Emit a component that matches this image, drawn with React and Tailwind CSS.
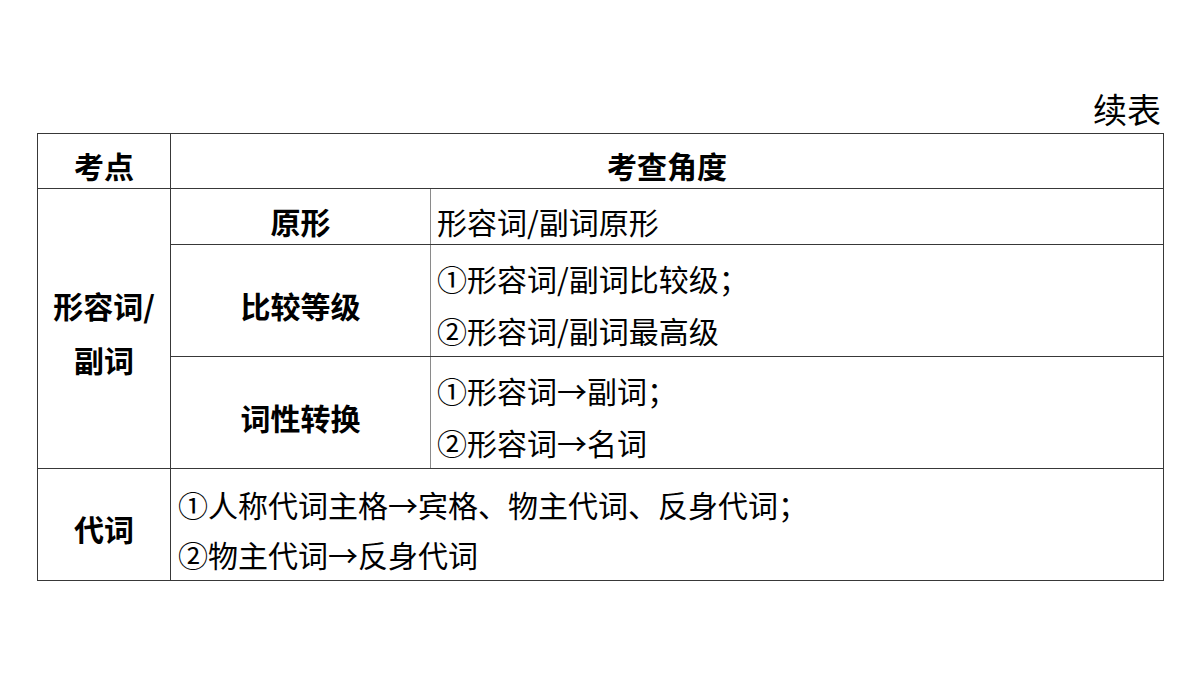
const cell = "border border-[#383838] align-middle";
const mid = "border border-[#383838] border-r-[#8a8a8a] align-middle";

export default function App() {
  return (
    <div
      className="w-[1200px] h-[675px] bg-white text-black"
      style={{ fontFamily: '"Noto Sans CJK SC", "Noto Sans", sans-serif' }}
    >
      <div className="pt-[88px] pl-[37px]">
        {/* caption */}
        <div className="w-[1124px] text-right text-[34px] leading-[42px] h-[45px]">续表</div>

        <table className="border-collapse table-fixed text-[30px] leading-[42px]">
          <colgroup>
            <col className="w-[133px]" />
            <col className="w-[260px]" />
            <col className="w-[733px]" />
          </colgroup>
          <tbody>
            <tr className="h-[55px]">
              <td className={`${cell} text-center font-bold pt-[8px]`}>考点</td>
              <td colSpan={2} className={`${cell} text-center font-bold pt-[8px]`}>
                考查角度
              </td>
            </tr>
            <tr className="h-[56px]">
              <td rowSpan={3} className={`${cell} text-center font-bold leading-[54px] pt-[6px]`}>
                形容词/
                <br />
                副词
              </td>
              <td className={`${mid} text-center font-bold pt-[8px]`}>原形</td>
              <td className={`${cell} pl-[6px] pt-[8px]`}>形容词/副词原形</td>
            </tr>
            <tr className="h-[112px]">
              <td className={`${mid} text-center font-bold pt-[8px]`}>比较等级</td>
              <td className={`${cell} pl-[6px] leading-[52px] pt-[6px]`}>
                ①形容词/副词比较级；
                <br />
                ②形容词/副词最高级
              </td>
            </tr>
            <tr className="h-[112px]">
              <td className={`${mid} text-center font-bold pt-[8px]`}>词性转换</td>
              <td className={`${cell} pl-[6px] leading-[52px] pt-[6px]`}>
                ①形容词→副词；
                <br />
                ②形容词→名词
              </td>
            </tr>
            <tr className="h-[112px]">
              <td className={`${cell} text-center font-bold pt-[6px]`}>代词</td>
              <td colSpan={2} className={`${cell} pl-[7px] leading-[50px] pt-[8px]`}>
                ①人称代词主格→宾格、物主代词、反身代词；
                <br />
                ②物主代词→反身代词
              </td>
            </tr>
          </tbody>
        </table>
      </div>
    </div>
  );
}
